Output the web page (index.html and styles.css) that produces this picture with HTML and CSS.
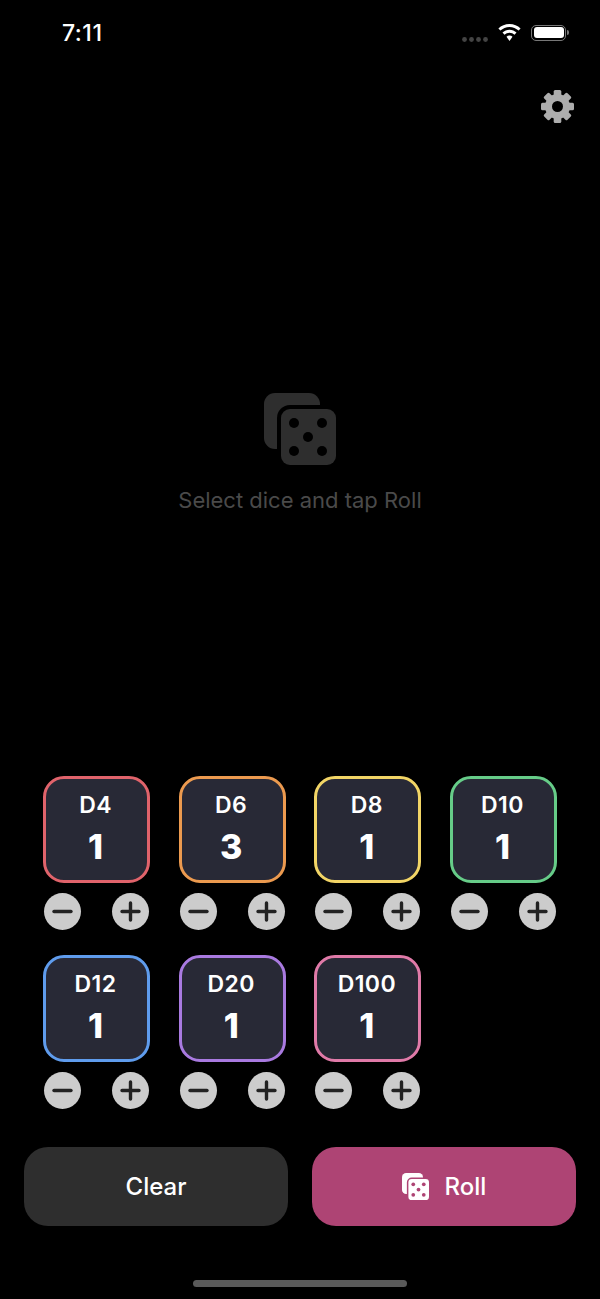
FILE: index.html
```html
<!DOCTYPE html>
<html>
<head>
    <meta charset="utf-8">
    <title>Dice Roller</title>
    <link rel="stylesheet" href="styles.css">
</head>
<body>

    <svg class="defs" width="0" height="0">
        <symbol id="dice" viewBox="0 0 72 72">
            <rect x="0" y="0" width="56" height="56" rx="11" fill="currentColor"/>
            <rect x="13" y="12" width="63" height="64" rx="13" fill="var(--cut)"/>
            <rect x="17" y="16" width="55" height="56" rx="9" fill="currentColor"/>
            <g fill="var(--cut)">
                <circle cx="30" cy="30" r="5"/>
                <circle cx="58" cy="30" r="5"/>
                <circle cx="44" cy="44" r="5"/>
                <circle cx="30" cy="58" r="5"/>
                <circle cx="58" cy="58" r="5"/>
            </g>
        </symbol>
        <symbol id="minus" viewBox="0 0 37 37">
            <path d="M10 18.500h17" stroke="#222" stroke-width="3.400" stroke-linecap="round"/>
        </symbol>
        <symbol id="plus" viewBox="0 0 37 37">
            <path d="M10 18.500h17M18.500 10v17" stroke="#222" stroke-width="3.400" stroke-linecap="round"/>
        </symbol>
    </svg>

    <div id="page">
        <div class="statusBar">
            <div class="time">7:11</div>
            <div class="statusIcons">
                <svg class="signal" width="26" height="5" viewBox="0 0 26 5">
                    <circle cx="2.500" cy="2.500" r="2.400"/>
                    <circle cx="9.500" cy="2.500" r="2.400"/>
                    <circle cx="16.500" cy="2.500" r="2.400"/>
                    <circle cx="23.500" cy="2.500" r="2.400"/>
                </svg>
                <svg class="wifi" width="23" height="17" viewBox="0 0 23 17">
                    <path d="M11.500 0C7.200 0 3.300 1.700.4 4.500l2 2.100C4.800 4.300 8 2.900 11.500 2.900s6.700 1.400 9.100 3.700l2-2.100C19.700 1.700 15.800 0 11.500 0z"/>
                    <path d="M11.500 5.800c-2.700 0-5.200 1.100-7 2.800l2 2.100c1.300-1.200 3.100-2 5-2s3.700.8 5 2l2-2.100c-1.800-1.700-4.300-2.800-7-2.800z"/>
                    <path d="M11.500 11.500c-1.200 0-2.200.4-3 1.200l3 4.300 3-4.300c-.8-.8-1.800-1.200-3-1.200z"/>
                </svg>
                <div class="battery"><div class="batteryFill"></div></div>
                <div class="batteryNub"></div>
            </div>
        </div>

        <div class="toolBar">
            <svg class="gear" width="33" height="33" viewBox="0 0 33 33">
                <g fill="#adadad">
                    <rect x="12.700" y="0" width="7.600" height="33" rx="1.500"/>
                    <rect x="12.700" y="0" width="7.600" height="33" rx="1.500" transform="rotate(45 16.500 16.500)"/>
                    <rect x="12.700" y="0" width="7.600" height="33" rx="1.500" transform="rotate(90 16.500 16.500)"/>
                    <rect x="12.700" y="0" width="7.600" height="33" rx="1.500" transform="rotate(135 16.500 16.500)"/>
                    <circle cx="16.500" cy="16.500" r="12.500"/>
                </g>
                <circle cx="16.500" cy="16.500" r="5.500" fill="#000"/>
            </svg>
        </div>

        <div class="empty">
            <svg class="emptyIcon" width="72" height="72"><use href="#dice"/></svg>
            <div class="emptyText">Select dice and tap Roll</div>
        </div>

        <div class="diceGrid">
            <div class="dieCell">
                <div class="die red"><div class="dieName">D4</div><div class="dieCount">1</div></div>
                <div class="controls">
                    <div class="stepBtn"><svg width="37" height="37"><use href="#minus"/></svg></div>
                    <div class="stepBtn"><svg width="37" height="37"><use href="#plus"/></svg></div>
                </div>
            </div>
            <div class="dieCell">
                <div class="die orange"><div class="dieName">D6</div><div class="dieCount">3</div></div>
                <div class="controls">
                    <div class="stepBtn"><svg width="37" height="37"><use href="#minus"/></svg></div>
                    <div class="stepBtn"><svg width="37" height="37"><use href="#plus"/></svg></div>
                </div>
            </div>
            <div class="dieCell">
                <div class="die yellow"><div class="dieName">D8</div><div class="dieCount">1</div></div>
                <div class="controls">
                    <div class="stepBtn"><svg width="37" height="37"><use href="#minus"/></svg></div>
                    <div class="stepBtn"><svg width="37" height="37"><use href="#plus"/></svg></div>
                </div>
            </div>
            <div class="dieCell">
                <div class="die green"><div class="dieName">D10</div><div class="dieCount">1</div></div>
                <div class="controls">
                    <div class="stepBtn"><svg width="37" height="37"><use href="#minus"/></svg></div>
                    <div class="stepBtn"><svg width="37" height="37"><use href="#plus"/></svg></div>
                </div>
            </div>
            <div class="dieCell">
                <div class="die blue"><div class="dieName">D12</div><div class="dieCount">1</div></div>
                <div class="controls">
                    <div class="stepBtn"><svg width="37" height="37"><use href="#minus"/></svg></div>
                    <div class="stepBtn"><svg width="37" height="37"><use href="#plus"/></svg></div>
                </div>
            </div>
            <div class="dieCell">
                <div class="die purple"><div class="dieName">D20</div><div class="dieCount">1</div></div>
                <div class="controls">
                    <div class="stepBtn"><svg width="37" height="37"><use href="#minus"/></svg></div>
                    <div class="stepBtn"><svg width="37" height="37"><use href="#plus"/></svg></div>
                </div>
            </div>
            <div class="dieCell">
                <div class="die pink"><div class="dieName">D100</div><div class="dieCount">1</div></div>
                <div class="controls">
                    <div class="stepBtn"><svg width="37" height="37"><use href="#minus"/></svg></div>
                    <div class="stepBtn"><svg width="37" height="37"><use href="#plus"/></svg></div>
                </div>
            </div>
        </div>

        <div class="actions">
            <div class="action clear">Clear</div>
            <div class="action roll">
                <svg class="rollIcon" width="27" height="27"><use href="#dice"/></svg>
                <span>Roll</span>
            </div>
        </div>

        <div class="homeBar"></div>
    </div>

</body>
</html>
```

FILE: styles.css
```css
* {box-sizing: border-box; font-family: Inter, "Noto Sans", sans-serif;}
html, body {margin: 0; background-color: #000;}
.defs {display: block; position: absolute;}
#page {
    color: #fff;
    display: flex;
    flex-direction: column;
    height: 1299px;
    overflow: hidden;
    padding-bottom: 12px;
    width: 600px;
}

.statusBar {
    align-items: center;
    display: flex;
    height: 65px;
    justify-content: space-between;
    padding: 0 31px 0 62px;
}
.time {font-size: 23px; font-weight: 500; letter-spacing: 0.5px;}
.statusIcons {align-items: center; display: flex;}
.signal {fill: #444; margin: 13px 10px 0 0;}
.wifi {fill: #fff; margin: 0 10px 0 0;}
.battery {
    border: 1.5px solid #777;
    border-radius: 5px;
    height: 16px;
    padding: 1.5px;
    width: 35px;
}
.batteryFill {background-color: #fff; border-radius: 3px; height: 100%;}
.batteryNub {
    background-color: #777;
    border-radius: 0 2px 2px 0;
    height: 5px;
    margin-left: 1px;
    width: 2px;
}

.toolBar {display: flex; justify-content: flex-end; padding: 25px 26px 0 0;}
.gear {display: block;}

.empty {
    align-items: center;
    display: flex;
    flex: 1;
    flex-direction: column;
    justify-content: center;
    padding-top: 6px;
}
.emptyIcon {--cut: #000; color: #2e2e2e; display: block;}
.emptyText {color: #4a4a4a; font-size: 22px; margin-top: 22px;}

.diceGrid {
    display: grid;
    grid-template-columns: repeat(4, 107px);
    justify-content: space-between;
    padding: 0 43px;
    row-gap: 25px;
}
.die {
    align-items: center;
    background-color: #282936;
    border: 3px solid #888;
    border-radius: 21px;
    display: flex;
    flex-direction: column;
    height: 107px;
    justify-content: center;
    padding: 2px 2px 0 0;
    width: 107px;
}
.dieName {font-size: 23px; font-weight: 600; letter-spacing: 0.4px; line-height: 26px; margin-top: -1px;}
.dieCount {font-size: 34px; font-weight: 800; line-height: 42px; margin-top: 8px;}
.red {border-color: #e0636b;}
.orange {border-color: #ec9a4f;}
.yellow {border-color: #f2d566;}
.green {border-color: #66cc88;}
.blue {border-color: #5f9ced;}
.purple {border-color: #a97ae0;}
.pink {border-color: #e07aa8;}

.controls {display: flex; justify-content: space-between; margin-top: 10px; padding: 0 1px;}
.stepBtn {background-color: #ccc; border-radius: 50%; height: 37px; width: 37px;}
.stepBtn svg {display: block;}

.actions {display: flex; gap: 24px; margin-top: 38px; padding: 0 24px;}
.action {
    align-items: center;
    border-radius: 24px;
    display: flex;
    flex: 1;
    font-size: 24px;
    font-weight: 500;
    gap: 16px;
    height: 79px;
    justify-content: center;
}
.clear {background-color: #2e2e2e;}
.roll {background-color: #ae4474;}
.rollIcon {--cut: #ae4474; color: #fff; display: block;}

.homeBar {
    background-color: #5a5a5a;
    border-radius: 4px;
    height: 7px;
    margin: 54px auto 0;
    width: 214px;
}
```
